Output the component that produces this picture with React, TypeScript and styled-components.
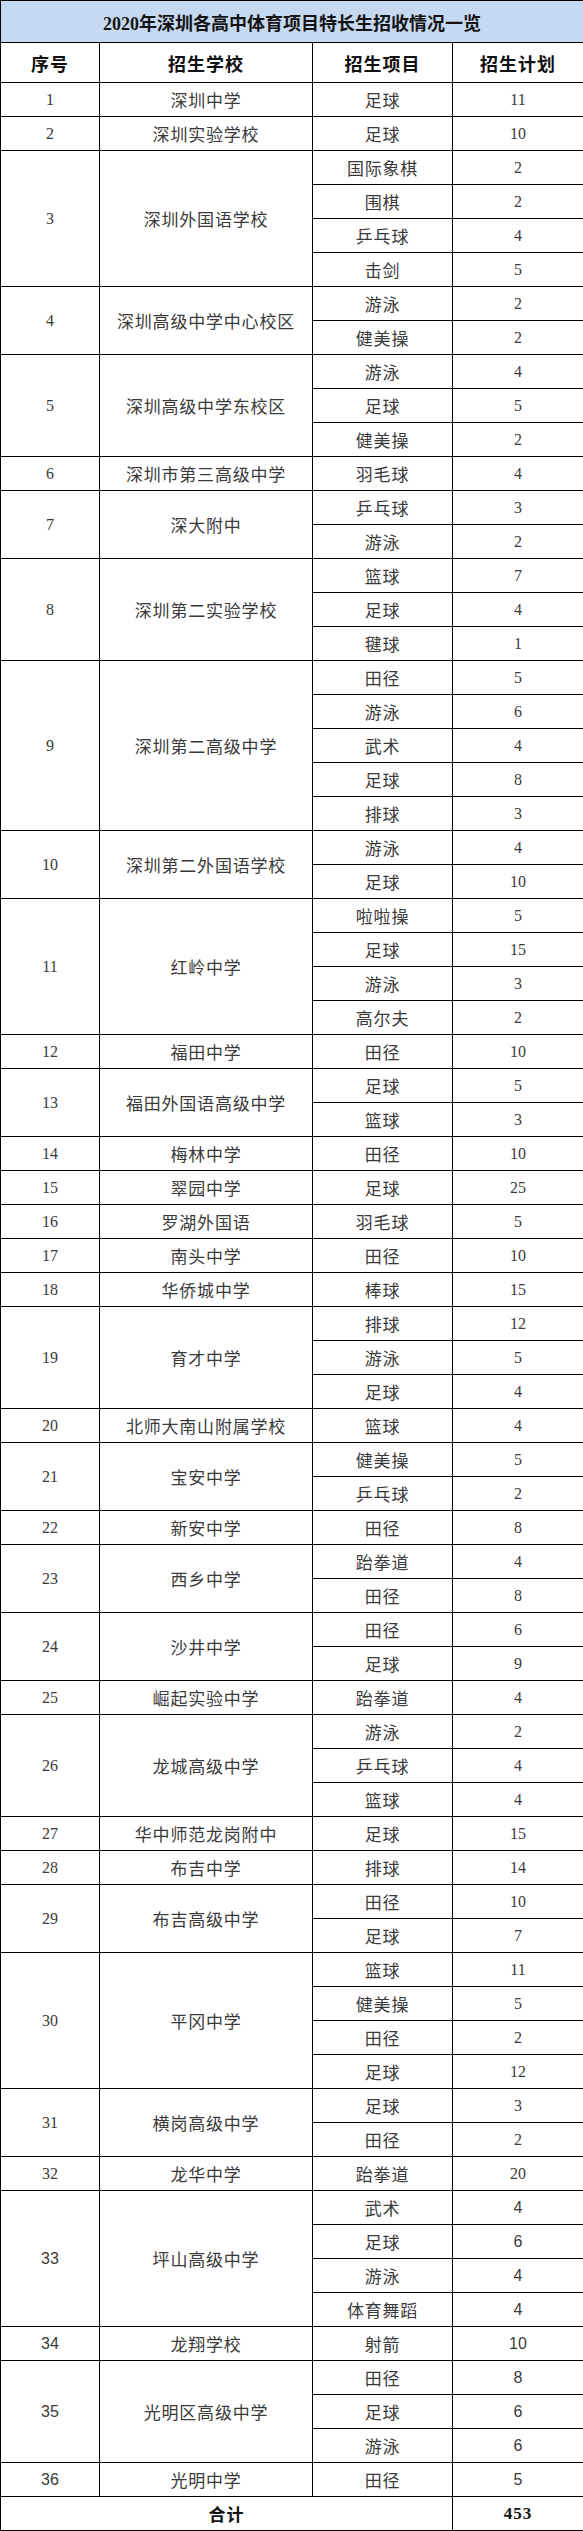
import styled, { createGlobalStyle } from 'styled-components'

const GlobalStyle = createGlobalStyle`
  body {
    margin: 0;
    background: #fff;
  }
`

type School = { name: string; items: [string, number][] }

const schools: School[] = [
  { name: '深圳中学', items: [['足球', 11]] },
  { name: '深圳实验学校', items: [['足球', 10]] },
  { name: '深圳外国语学校', items: [['国际象棋', 2], ['围棋', 2], ['乒乓球', 4], ['击剑', 5]] },
  { name: '深圳高级中学中心校区', items: [['游泳', 2], ['健美操', 2]] },
  { name: '深圳高级中学东校区', items: [['游泳', 4], ['足球', 5], ['健美操', 2]] },
  { name: '深圳市第三高级中学', items: [['羽毛球', 4]] },
  { name: '深大附中', items: [['乒乓球', 3], ['游泳', 2]] },
  { name: '深圳第二实验学校', items: [['篮球', 7], ['足球', 4], ['毽球', 1]] },
  { name: '深圳第二高级中学', items: [['田径', 5], ['游泳', 6], ['武术', 4], ['足球', 8], ['排球', 3]] },
  { name: '深圳第二外国语学校', items: [['游泳', 4], ['足球', 10]] },
  { name: '红岭中学', items: [['啦啦操', 5], ['足球', 15], ['游泳', 3], ['高尔夫', 2]] },
  { name: '福田中学', items: [['田径', 10]] },
  { name: '福田外国语高级中学', items: [['足球', 5], ['篮球', 3]] },
  { name: '梅林中学', items: [['田径', 10]] },
  { name: '翠园中学', items: [['足球', 25]] },
  { name: '罗湖外国语', items: [['羽毛球', 5]] },
  { name: '南头中学', items: [['田径', 10]] },
  { name: '华侨城中学', items: [['棒球', 15]] },
  { name: '育才中学', items: [['排球', 12], ['游泳', 5], ['足球', 4]] },
  { name: '北师大南山附属学校', items: [['篮球', 4]] },
  { name: '宝安中学', items: [['健美操', 5], ['乒乓球', 2]] },
  { name: '新安中学', items: [['田径', 8]] },
  { name: '西乡中学', items: [['跆拳道', 4], ['田径', 8]] },
  { name: '沙井中学', items: [['田径', 6], ['足球', 9]] },
  { name: '崛起实验中学', items: [['跆拳道', 4]] },
  { name: '龙城高级中学', items: [['游泳', 2], ['乒乓球', 4], ['篮球', 4]] },
  { name: '华中师范龙岗附中', items: [['足球', 15]] },
  { name: '布吉中学', items: [['排球', 14]] },
  { name: '布吉高级中学', items: [['田径', 10], ['足球', 7]] },
  { name: '平冈中学', items: [['篮球', 11], ['健美操', 5], ['田径', 2], ['足球', 12]] },
  { name: '横岗高级中学', items: [['足球', 3], ['田径', 2]] },
  { name: '龙华中学', items: [['跆拳道', 20]] },
  { name: '坪山高级中学', items: [['武术', 4], ['足球', 6], ['游泳', 4], ['体育舞蹈', 4]] },
  { name: '龙翔学校', items: [['射箭', 10]] },
  { name: '光明区高级中学', items: [['田径', 8], ['足球', 6], ['游泳', 6]] },
  { name: '光明中学', items: [['田径', 5]] },
]

const Table = styled.table`
  width: 583px;
  border-collapse: collapse;
  table-layout: fixed;
  font-family: 'Liberation Serif', 'Noto Sans CJK SC', serif;
`

const Row = styled.tr<{ $h: number }>`
  height: ${(p) => p.$h}px;
`

const Cell = styled.td<{ $sans?: boolean }>`
  border: 1px solid #000;
  padding: 0;
  text-align: center;
  vertical-align: middle;
  color: #3a3a3a;
  font-size: 17px;
  letter-spacing: 0.8px;
  font-family: ${(p) =>
    p.$sans
      ? "'Liberation Sans', 'Noto Sans CJK SC', sans-serif"
      : "'Liberation Serif', 'Noto Sans CJK SC', serif"};
`

const NumCell = styled(Cell)`
  font-size: 16px;
  letter-spacing: 0;
`

const TitleCell = styled.td`
  border: 1px solid #000;
  padding: 0;
  background: #c5d9f1;
  text-align: center;
  font-size: 18px;
  font-weight: bold;
  color: #141414;
`

const HeadCell = styled.th`
  border: 1px solid #000;
  padding: 0;
  font-size: 18px;
  font-weight: bold;
  letter-spacing: 1px;
  color: #111;
`

const TotalCell = styled(HeadCell)`
  font-size: 17px;
`

function App() {
  return (
    <>
      <GlobalStyle />
      <Table>
        <colgroup>
          <col style={{ width: 99 }} />
          <col style={{ width: 213 }} />
          <col style={{ width: 140 }} />
          <col style={{ width: 131 }} />
        </colgroup>
        <tbody>
          <Row $h={42}>
            <TitleCell colSpan={4}>2020年深圳各高中体育项目特长生招收情况一览</TitleCell>
          </Row>
          <Row $h={40}>
            <HeadCell>序号</HeadCell>
            <HeadCell>招生学校</HeadCell>
            <HeadCell>招生项目</HeadCell>
            <HeadCell>招生计划</HeadCell>
          </Row>
          {schools.map((s, i) =>
            s.items.map(([sport, n], j) => {
              const sans = i >= 32
              return (
                <Row $h={34} key={`${i}-${j}`}>
                  {j === 0 && (
                    <>
                      <NumCell rowSpan={s.items.length} $sans={sans}>
                        {i + 1}
                      </NumCell>
                      <Cell rowSpan={s.items.length}>{s.name}</Cell>
                    </>
                  )}
                  <Cell>{sport}</Cell>
                  <NumCell $sans={sans}>{n}</NumCell>
                </Row>
              )
            })
          )}
          <Row $h={34}>
            <TotalCell colSpan={3}>合计</TotalCell>
            <TotalCell>453</TotalCell>
          </Row>
        </tbody>
      </Table>
    </>
  )
}

export default App
